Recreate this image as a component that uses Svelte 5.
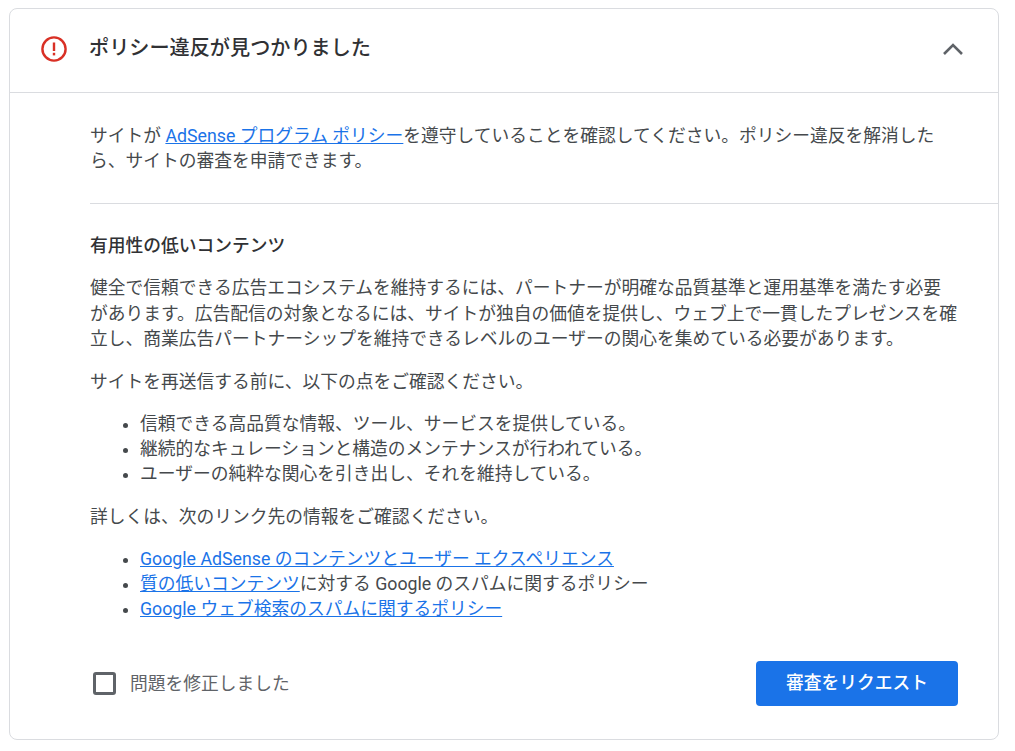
<script>
  const items = [
    '信頼できる高品質な情報、ツール、サービスを提供している。',
    '継続的なキュレーションと構造のメンテナンスが行われている。',
    'ユーザーの純粋な関心を引き出し、それを維持している。'
  ];
</script>

<div class="page">
  <section class="card">
    <header class="head">
      <svg class="alert" viewBox="0 0 26 26" width="26" height="26" aria-hidden="true">
        <circle cx="13" cy="13" r="11.6" fill="none" stroke="#d93025" stroke-width="2.4" />
        <rect x="11.8" y="6.5" width="2.4" height="8.5" fill="#d93025" />
        <rect x="11.8" y="16.8" width="2.4" height="2.6" fill="#d93025" />
      </svg>
      <h2>ポリシー違反が見つかりました</h2>
      <svg class="chev" viewBox="0 0 22 14" width="22" height="14" aria-hidden="true">
        <path d="M2 12 L11 3 L20 12" fill="none" stroke="#5f6368" stroke-width="2.6" />
      </svg>
    </header>
    <div class="body">
      <p class="intro">サイトが <a href="#a">AdSense プログラム ポリシー</a>を遵守していることを確認してください。ポリシー違反を解消したら、サイトの審査を申請できます。</p>
      <hr />
      <h3>有用性の低いコンテンツ</h3>
      <p class="para">健全で信頼できる広告エコシステムを維持するには、パートナーが明確な品質基準と運用基準を満たす必要があります。広告配信の対象となるには、サイトが独自の価値を提供し、ウェブ上で一貫したプレゼンスを確立し、商業広告パートナーシップを維持できるレベルのユーザーの関心を集めている必要があります。</p>
      <p class="lead">サイトを再送信する前に、以下の点をご確認ください。</p>
      <ul>
        {#each items as item}
          <li>{item}</li>
        {/each}
      </ul>
      <p class="lead">詳しくは、次のリンク先の情報をご確認ください。</p>
      <ul>
        <li><a href="#b">Google AdSense のコンテンツとユーザー エクスペリエンス</a></li>
        <li><a href="#c">質の低いコンテンツ</a>に対する Google のスパムに関するポリシー</li>
        <li><a href="#d">Google ウェブ検索のスパムに関するポリシー</a></li>
      </ul>
      <div class="foot">
        <label class="check">
          <span class="box"></span>
          <span class="label">問題を修正しました</span>
        </label>
        <button type="button">審査をリクエスト</button>
      </div>
    </div>
  </section>
</div>

<style>
  :global(body) {
    margin: 0;
    background: #fff;
  }
  .page {
    padding: 8px 16px 10px 9px;
    font-family: Roboto, "Noto Sans CJK JP", sans-serif;
    font-size: 17.76px;
    line-height: 25.6px;
    color: #45494c;
  }
  .card {
    border: 1px solid #dadce0;
    border-radius: 8px;
    height: 732px;
    box-sizing: border-box;
  }
  .head {
    display: flex;
    align-items: center;
    height: 84px;
    box-sizing: border-box;
    padding: 0 34px 3px 31px;
    border-bottom: 1px solid #dadce0;
  }
  .alert {
    flex: none;
    margin-right: 22px;
  }
  .chev {
    flex: none;
    margin-left: auto;
  }
  h2 {
    margin: 0;
    font-size: 20.15px;
    font-weight: 500;
    color: #303134;
  }
  .body {
    padding: 30.5px 0 0 80px;
  }
  p {
    margin: 0 0 17.6px;
    padding-right: 39.6px;
  }
  .lead {
    margin-bottom: 15.6px;
  }
  .intro {
    margin-bottom: 28.5px;
    padding-right: 50px;
  }
  hr {
    border: 0;
    border-top: 1px solid #dadce0;
    margin: 0 0 29.8px;
  }
  h3 {
    margin: 0 0 16.4px;
    font-size: 17.76px;
    font-weight: 500;
    color: #303134;
  }
  a {
    color: #1a73e8;
    text-decoration: underline;
  }
  ul {
    margin: 0 0 18px;
    padding: 0 0 0 50px;
    line-height: 25.3px;
  }
  .foot {
    display: flex;
    align-items: center;
    justify-content: space-between;
    margin-top: 38.6px;
    padding-right: 40px;
  }
  .check {
    display: flex;
    align-items: center;
    gap: 14px;
    padding-left: 3px;
    color: #5f6368;
  }
  .label {
    padding-top: 2px;
  }
  .box {
    width: 23px;
    height: 23px;
    box-sizing: border-box;
    border: 3px solid #5f6368;
    border-radius: 3px;
  }
  button {
    width: 202px;
    height: 45px;
    padding: 1px 0 0;
    border: 0;
    border-radius: 4px;
    background: #1a73e8;
    color: #fff;
    font: inherit;
    font-weight: 500;
  }
</style>
